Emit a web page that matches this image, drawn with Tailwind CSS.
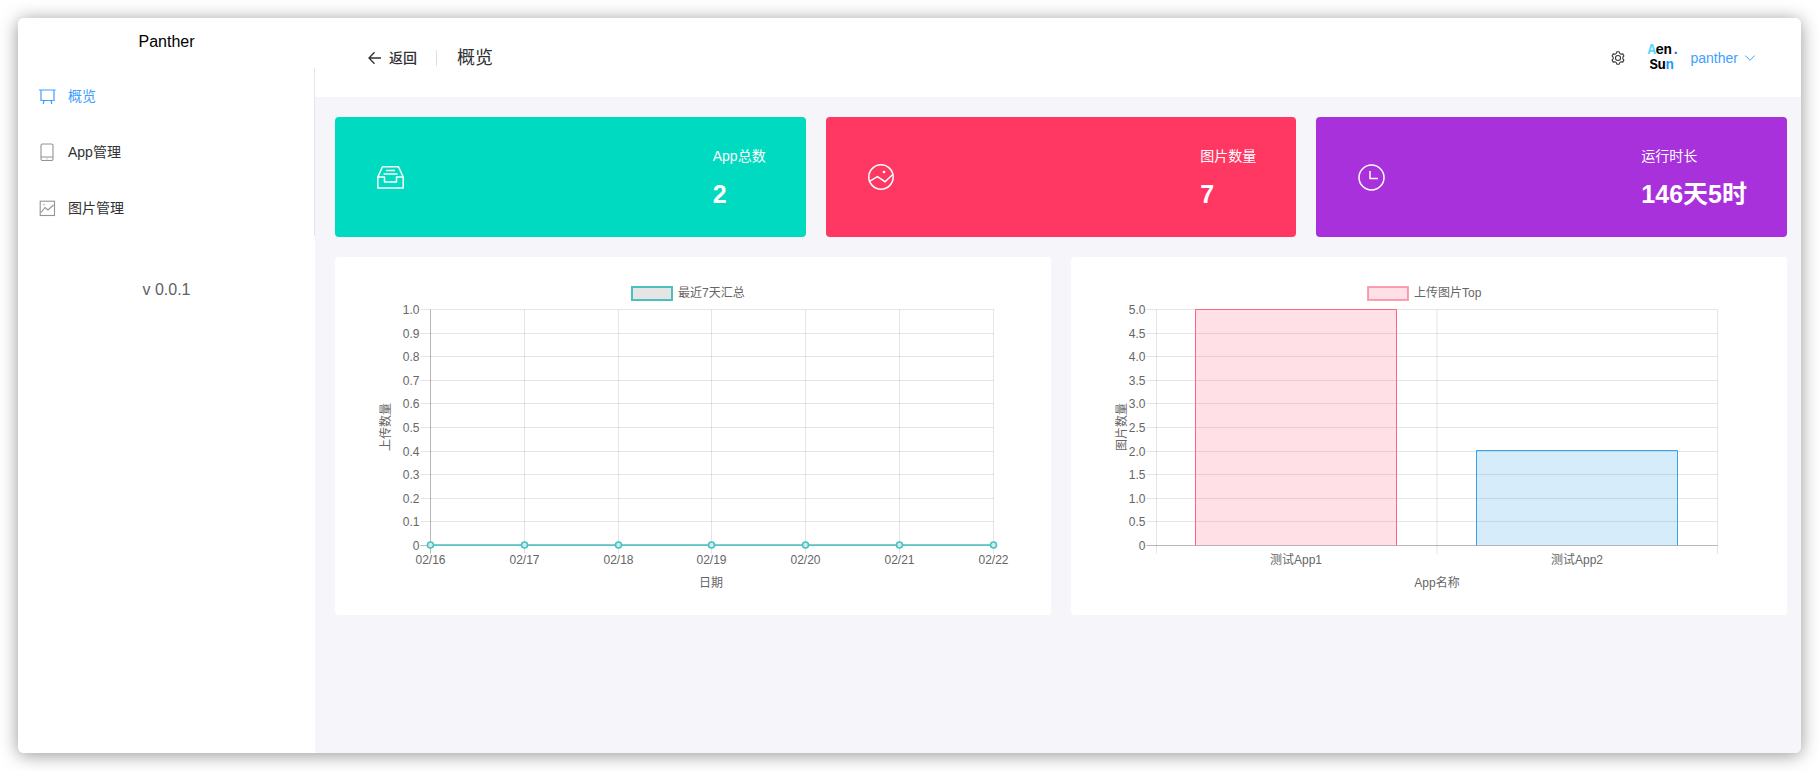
<!DOCTYPE html>
<html lang="zh-CN">
<head>
    <meta charset="UTF-8">
    <title>Panther</title>
    <script src="https://cdn.jsdelivr.net/npm/@tailwindcss/browser@4"></script>
</head>
<body class="bg-white font-['Liberation_Sans','Noto_Sans_CJK_SC',sans-serif]">
    <div class="h-[771px] w-full overflow-hidden p-[18px]">
        <div class="flex h-[735px] overflow-hidden rounded-md bg-white shadow-[0_2px_18px_rgba(0,0,0,0.42)]">
            <!-- Sidebar -->
            <aside class="w-[297px] shrink-0 bg-white">
                <div class="mb-[2px] h-[48px] text-center text-base leading-[48px] text-black">Panther</div>
                <nav class="border-r border-[#e6e6e6] text-sm text-[#303133]">
                    <a class="flex h-14 items-center gap-3 pl-5 text-[#409eff]">
                        <svg class="h-[18px] w-[18px]" viewBox="0 0 18 18" fill="none" stroke="currentColor" stroke-width="1.2">
                            <path d="M1 3h16.6M3 3v10.5h13V3M6 13.5 5.2 17M13 13.5l.8 3.500"/>
                        </svg>
                        <span>概览</span>
                    </a>
                    <a class="flex h-14 items-center gap-3 pl-5">
                        <svg class="h-[18px] w-[18px] text-[#909399]" viewBox="0 0 18 18" fill="none" stroke="currentColor" stroke-width="1.100">
                            <rect x="3" y="1" width="12" height="16.500" rx="1.500"/>
                            <path d="M3 14h12"/>
                            <circle cx="9" cy="15.800" r=".6" fill="currentColor" stroke="none"/>
                        </svg>
                        <span>App管理</span>
                    </a>
                    <a class="flex h-14 items-center gap-3 pl-5">
                        <svg class="h-[18px] w-[18px] text-[#909399]" viewBox="0 0 18 18" fill="none" stroke="currentColor" stroke-width="1.100">
                            <rect x="2.200" y="2.200" width="14.300" height="14.300"/>
                            <path d="M3 13.500 7 8.500l3 2.500 5.500-5"/>
                            <circle cx="6" cy="5.500" r=".7" fill="currentColor" stroke="none"/>
                        </svg>
                        <span>图片管理</span>
                    </a>
                </nav>
                <div class="mt-[42px] text-center text-base leading-6 text-[#606266]">v 0.0.1</div>
            </aside>

            <main class="min-w-0 flex-1 bg-[#f5f5fa]">
                <!-- Header -->
                <header class="flex h-[79px] items-center justify-between bg-white pl-[53px] pr-[46px]">
                    <div class="flex items-center text-[#303133]">
                        <svg class="mr-2 h-[14px] w-[13px]" viewBox="0 0 13 14" fill="none" stroke="currentColor" stroke-width="1.300">
                            <path d="M13 7H1M6.500 1.200 1 7l5.500 5.800"/>
                        </svg>
                        <span class="text-sm font-medium">返回</span>
                        <div class="ml-[19px] mr-5 h-4 w-px bg-[#dcdfe6]"></div>
                        <span class="text-lg">概览</span>
                    </div>
                    <div class="flex items-center">
                        <svg class="mr-[23px] h-[14px] w-[14px] text-[#303133]" viewBox="0 0 16 16" fill="none" stroke="currentColor" stroke-width="1.200">
                            <polygon id="gear" stroke-linejoin="round"/>
                            <circle cx="8" cy="8" r="2.900"/>
                        </svg>
                        <!-- logo -->
                        <div class="mr-[11px] w-[32px] font-['Liberation_Mono',monospace] text-[14px] font-bold leading-[15px] text-black">
                            <div class="tracking-[-0.4px]"><span class="text-[#5cd6ff]">A</span>en<span class="text-[#5555cc]">.</span></div>
                            <div class="ml-[2px] tracking-[-0.4px]">Su<span class="text-[#1e9bff]">n</span></div>
                        </div>
                        <span class="mr-[7px] text-sm text-[#409eff]">panther</span>
                        <svg class="h-[6px] w-[10px] text-[#409eff]" viewBox="0 0 10 6" fill="none" stroke="currentColor">
                            <path d="M.3.500 5 5.300 9.700.500"/>
                        </svg>
                    </div>
                </header>

                <div class="pb-5 pl-5 pr-[14px] pt-5">
                    <!-- Stat cards -->
                    <section class="grid grid-cols-3 gap-5 text-white">
                        <div class="flex h-[120px] items-center justify-between rounded bg-[#00dac0] pl-[42px] pr-10">
                            <svg class="h-[23px] w-[27px]" viewBox="0 0 27 23" fill="none" stroke="currentColor" stroke-width="1.500" stroke-linejoin="round">
                                <path d="M.8 11v11h25.400V11L21.500.8h-16zM.8 11H7.500v5h12v-5h6.700M9 4.500h9M6.500 8h14"/>
                            </svg>
                            <div>
                                <div class="text-sm leading-5">App总数</div>
                                <div class="mt-[13px] text-[25px] font-bold leading-[30px]">2</div>
                            </div>
                        </div>
                        <div class="flex h-[120px] items-center justify-between rounded bg-[#ff3763] pl-[42px] pr-10">
                            <svg class="h-[26px] w-[26px]" viewBox="0 0 26 26" fill="none" stroke="currentColor" stroke-width="1.500">
                                <circle cx="13" cy="13" r="12.200"/>
                                <path d="M1 17.700 9.500 12.700 17 17.700 25 10.300"/>
                                <circle cx="16" cy="8" r="1.300" fill="currentColor" stroke="none"/>
                            </svg>
                            <div>
                                <div class="text-sm leading-5">图片数量</div>
                                <div class="mt-[13px] text-[25px] font-bold leading-[30px]">7</div>
                            </div>
                        </div>
                        <div class="flex h-[120px] items-center justify-between rounded bg-[#a931db] pl-[42px] pr-10">
                            <svg class="h-[27px] w-[27px]" viewBox="0 0 27 27" fill="none" stroke="currentColor" stroke-width="1.500">
                                <circle cx="13.500" cy="13.500" r="12.500"/>
                                <path d="M12 7v7.500h8"/>
                            </svg>
                            <div>
                                <div class="text-sm leading-5">运行时长</div>
                                <div class="mt-[13px] text-[25px] font-bold leading-[30px]">146天5时</div>
                            </div>
                        </div>
                    </section>

                    <!-- Charts -->
                    <section class="mt-5 grid grid-cols-2 gap-5">
                        <div class="h-[358px] rounded bg-white">
                            <svg id="lineChart" class="block h-full w-full"></svg>
                        </div>
                        <div class="h-[358px] rounded bg-white">
                            <svg id="barChart" class="block h-full w-full"></svg>
                        </div>
                    </section>
                </div>
            </main>
        </div>
    </div>

    <script>
        const GRID = 'rgba(0,0,0,0.1)';
        const ZERO = 'rgba(0,0,0,0.28)';
        const TOP = 52.5;
        const BOTTOM = 288.5;

        const line = (x1, y1, x2, y2, color, w = 1) =>
            `<line x1="${x1}" y1="${y1}" x2="${x2}" y2="${y2}" stroke="${color}" stroke-width="${w}"/>`;

        const label = (x, y, str, anchor = 'middle', extra = '') =>
            `<text x="${x}" y="${y}" font-size="12" fill="#666" text-anchor="${anchor}" dominant-baseline="central" ${extra}>${str}</text>`;

        // Y grid and tick labels, shared by both charts
        function yAxis(left, right, ticks) {
            const n = ticks.length - 1;
            return ticks.map((t, i) => {
                const y = Math.round(TOP + (BOTTOM - TOP) * i / n - 0.5) + 0.5;
                return line(left - 10, y, right, y, i === n ? ZERO : GRID) + label(left - 11, y, t, 'end');
            }).join('');
        }

        function legend(w, str, fill, stroke, bw) {
            return `<rect x="297" y="30" width="${w}" height="13" fill="${fill}" stroke="${stroke}" stroke-width="${bw}"/>` +
                label(297 + w + 6, 36, str, 'start');
        }

        // Line chart
        const dates = ['02/16', '02/17', '02/18', '02/19', '02/20', '02/21', '02/22'];
        const x0 = 95.5, xStep = 93.83;
        const xs = dates.map((d, i) => Math.round(x0 + xStep * i - 0.5) + 0.5);
        let a = legend(40, '最近7天汇总', '#e5e5e5', '#4bc0c0', 2);
        xs.forEach((x, i) => a += line(x, TOP, x, BOTTOM + 8, i === 0 ? ZERO : GRID));
        a += yAxis(x0, xs[6], ['1.0', '0.9', '0.8', '0.7', '0.6', '0.5', '0.4', '0.3', '0.2', '0.1', '0']);
        a += line(xs[0], BOTTOM - 0.5, xs[6], BOTTOM - 0.5, 'rgba(75,192,192,0.75)', 2);
        xs.forEach((x, i) => {
            a += `<circle cx="${x}" cy="${BOTTOM - 0.5}" r="3" fill="#d8e8e8" stroke="#3fc4c4" stroke-width="1.500"/>`;
            a += label(x, 303, dates[i]);
        });
        a += label(376, 326, '日期');
        a += label(51, 170, '上传数量', 'middle', 'transform="rotate(-90 51 170)"');
        document.getElementById('lineChart').innerHTML = a;

        // Bar chart
        let b = legend(40, '上传图片Top', 'rgba(255,99,132,0.2)', 'rgba(255,99,132,0.6)', 2);
        [85.5, 366, 646.5].forEach(x => b += line(x, TOP, x, BOTTOM + 8, GRID));
        b += yAxis(85.5, 646.5, ['5.0', '4.5', '4.0', '3.5', '3.0', '2.5', '2.0', '1.5', '1.0', '0.5', '0']);
        const bars = [
            { x1: 124.5, x2: 325.5, top: TOP, fill: 'rgba(255,99,132,0.2)', stroke: 'rgb(255,99,132)', name: '测试App1' },
            { x1: 405.5, x2: 606.5, top: 193.5, fill: 'rgba(54,162,235,0.2)', stroke: 'rgb(54,162,235)', name: '测试App2' }
        ];
        bars.forEach(r => {
            b += `<rect x="${r.x1}" y="${r.top}" width="${r.x2 - r.x1}" height="${BOTTOM - r.top}" fill="${r.fill}"/>`;
            b += `<path d="M${r.x1} ${BOTTOM}V${r.top}H${r.x2}V${BOTTOM}" fill="none" stroke="${r.stroke}"/>`;
            b += label((r.x1 + r.x2) / 2, 303, r.name);
        });
        b += label(366, 326, 'App名称');
        b += label(51, 170, '图片数量', 'middle', 'transform="rotate(-90 51 170)"');
        document.getElementById('barChart').innerHTML = b;

        // Header gear icon
        const pts = [];
        for (let i = 0; i < 6; i++) {
            [[-20, 5.6], [-11, 7.2], [11, 7.2], [20, 5.6]].forEach(([d, r]) => {
                const t = (i * 60 + d) * Math.PI / 180;
                pts.push((8 + r * Math.sin(t)).toFixed(2) + ',' + (8 - r * Math.cos(t)).toFixed(2));
            });
        }
        document.getElementById('gear').setAttribute('points', pts.join(' '));
    </script>
</body>
</html>
